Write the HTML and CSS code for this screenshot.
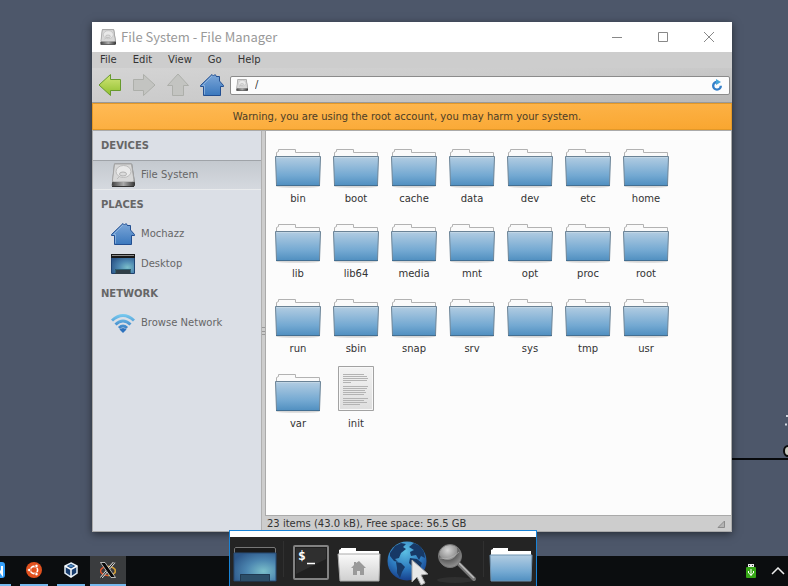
FILE: index.html
```html
<!DOCTYPE html>
<html lang="en">
<head>
<meta charset="utf-8">
<title>File System - File Manager</title>
<link rel="stylesheet" href="styles.css">
</head>
<body>
<svg class="defs" aria-hidden="true">
  <defs>
    <linearGradient id="gFolder" x1="0" y1="0" x2="0" y2="1"><stop offset="0" stop-color="#b3cde2"/><stop offset=".65" stop-color="#74a9d2"/><stop offset="1" stop-color="#508fc0"/></linearGradient>
    <linearGradient id="gHome" x1="0" y1="0" x2="0" y2="1"><stop offset="0" stop-color="#7ba6d8"/><stop offset="1" stop-color="#3b78bd"/></linearGradient>
    <linearGradient id="gGreen" x1="0" y1="0" x2="0" y2="1"><stop offset="0" stop-color="#d3e67a"/><stop offset="1" stop-color="#8fbf2d"/></linearGradient>
    <linearGradient id="gGrey" x1="0" y1="0" x2="0" y2="1"><stop offset="0" stop-color="#fafafa"/><stop offset="1" stop-color="#cfcfcf"/></linearGradient>
    <linearGradient id="gPaper" x1="0" y1="0" x2="0" y2="1"><stop offset="0" stop-color="#f3f3f3"/><stop offset="1" stop-color="#dedede"/></linearGradient>
    <linearGradient id="gDark" x1="0" y1="0" x2="1" y2="0"><stop offset="0" stop-color="#444"/><stop offset=".5" stop-color="#aaa"/><stop offset="1" stop-color="#333"/></linearGradient>
    <linearGradient id="gWifi" gradientUnits="userSpaceOnUse" x1="0" y1="3" x2="0" y2="22"><stop offset="0" stop-color="#7accf0"/><stop offset="1" stop-color="#2468b8"/></linearGradient>
    <radialGradient id="gDesk" cx=".7" cy=".65" r=".8"><stop offset="0" stop-color="#7bbfca"/><stop offset=".5" stop-color="#4c86b0"/><stop offset="1" stop-color="#2c5688"/></radialGradient>
    <radialGradient id="gGlobe" cx=".45" cy=".25" r=".75"><stop offset="0" stop-color="#5cc0e4"/><stop offset=".6" stop-color="#2c78bd"/><stop offset="1" stop-color="#17408c"/></radialGradient>
    <radialGradient id="gLens" cx=".4" cy=".25" r=".8"><stop offset="0" stop-color="#d5d5d5"/><stop offset=".5" stop-color="#929292"/><stop offset=".55" stop-color="#606060"/><stop offset="1" stop-color="#9a9a9a"/></radialGradient>
  </defs>
  <symbol id="folder" viewBox="0 0 48 48">
    <ellipse cx="24" cy="46.5" rx="22" ry="1.3" fill="#000" opacity=".15"/>
    <path d="M2.500 17V12.500L4.500 11.500V9.500H21.500V12.500H45.500V17Z" fill="#fafafa" stroke="#b2b2b2"/>
    <path d="M1.500 16.500H46.500L45.500 45.500H2.500Z" fill="url(#gFolder)" stroke="#6b8396"/>
    <path d="M2.500 17.500H45.500" stroke="#cadbe8" opacity=".7"/>
    <path d="M2 45.500H46" stroke="#436f92"/>
  </symbol>
  <symbol id="homefolder" viewBox="0 0 48 48">
    <path d="M4 17V12L6 11V10H21V13H44V17Z" fill="#fff"/>
    <path d="M3 16H45L44 43H5Z" fill="url(#gGrey)" stroke="#aaa"/>
    <path d="M24 23l7 7h-2v7h-4v-4h-3v4h-4v-7h-2l3-3v-3h2v1z" fill="#9a9a9a"/>
  </symbol>
  <symbol id="doc" viewBox="0 0 48 48">
    <path d="M6.500 1.500H41.500V45.500H6.500Z" fill="url(#gPaper)" stroke="#a2a2a2"/>
    <path d="M7.500 2.500H40.500V44.500H7.500Z" fill="none" stroke="#f8f8f8"/>
    <path d="M11 9.500H32M11 11.500H35M11 13.500H36M11 15.500H35M11 17.500H19M11 21.500H36M11 23.500H35M11 25.500H33M11 27.500H34M11 29.500H32M11 33.500H36M11 35.500H32M11 37.500H35M11 39.500H28" stroke="#b3b3b3"/>
  </symbol>
  <symbol id="drive" viewBox="0 0 24 24">
    <path d="M1 20L3 1Q3.200.5 4 .5H20Q21 .5 21.200 1L24 19V22Q24 23.500 22 23.500H2Q.5 23.500.5 22Z" fill="#858585"/>
    <path d="M3.500 1H20.500L23 17Q23 19 21 19H3Q1 19 1.500 17Z" fill="#d8d8d8" stroke="#a5a5a5"/>
    <ellipse cx="12.500" cy="8.500" rx="7.500" ry="6" fill="#e9e9e9" stroke="#bbb"/>
    <ellipse cx="12" cy="11" rx="3.500" ry="2" fill="#dcdcdc" stroke="#b0b0b0"/>
    <path d="M10 12L6 16" stroke="#bbb"/>
    <rect x="1" y="19" width="23" height="4" rx="1" fill="url(#gDark)"/>
    <path d="M1 23.500H23" stroke="#333"/>
  </symbol>
  <symbol id="home" viewBox="0 0 24 24">
    <path d="M12 1.500L13.500 3L15 1.500L17 4V3.500H19.500V8L23.500 12.500V13.500H20.500V22.500H3.500V13.500H.5V12.500Z" fill="url(#gHome)" stroke="#234f91"/>
    <path d="M12 3L2.500 12.500H4.500V21.500" fill="none" stroke="#9dbfe4" opacity=".7"/>
  </symbol>
  <symbol id="screen" viewBox="0 0 24 24">
    <rect x="0" y="2" width="24" height="20" rx="1" fill="#1f4270"/>
    <rect x="1" y="5" width="22" height="16" fill="url(#gDesk)"/>
    <path d="M0 6V2H24V6Z" fill="#181818"/><path d="M1 3.500H23" stroke="#8c8c8c"/>
    <path d="M4 17H20V22H4Z" fill="#303e47"/><path d="M4.500 21V17.500H19.500V21" fill="none" stroke="#2d6072"/>
  </symbol>
  <symbol id="wifi" viewBox="0 0 24 24">
    <g fill="none" stroke="url(#gWifi)" stroke-width="3"><path d="M1 9.500Q12 -.5 23 9.500"/><path d="M4.500 13.500Q12 6.500 19.500 13.500"/><path d="M8 17Q12 13 16 17"/></g>
    <path d="M8.500 18.500Q12 15.500 15.500 18.500L12 22Z" fill="#2d72bd"/>
  </symbol>
  <symbol id="arrow" viewBox="0 0 24 24"><path d="M1 12L12.500 1.500V6.500H22.500V17.500H12.500V22.500Z"/></symbol>
</svg>

<svg class="scene" viewBox="0 0 56 60" aria-hidden="true">
  <path d="M0 49H56" stroke="#07090c" stroke-width="2"/>
  <ellipse cx="56" cy="41" rx="4" ry="5" fill="#c9c8bd" stroke="#0a0a0a" stroke-width="2"/>
  <path d="M54 6h2M53 14.500h2" stroke="#cfd6df" stroke-width="2"/>
</svg>

<main class="window">
  <header class="titlebar">
    <svg class="title-icon"><use href="#drive"/></svg>
    <h1>File System - File Manager</h1>
    <div class="controls">
      <button aria-label="Minimize"><svg viewBox="0 0 12 12"><path d="M1 6.500H11"/></svg></button>
      <button aria-label="Maximize"><svg viewBox="0 0 12 12"><path d="M1.500 1.500H10.500V10.500H1.500Z"/></svg></button>
      <button aria-label="Close"><svg viewBox="0 0 12 12"><path d="M1 1L11 11M11 1L1 11"/></svg></button>
    </div>
  </header>
  <nav class="menubar"><button>File</button><button>Edit</button><button>View</button><button>Go</button><button>Help</button></nav>
  <div class="toolbar">
    <button class="back" aria-label="Back"><svg><use href="#arrow"/></svg></button>
    <button class="faded forward" aria-label="Forward" disabled><svg><use href="#arrow"/></svg></button>
    <button class="faded up" aria-label="Up" disabled><svg><use href="#arrow"/></svg></button>
    <button aria-label="Home"><svg><use href="#home"/></svg></button>
    <div class="location">
      <svg><use href="#drive"/></svg>
      <input type="text" value="/" aria-label="Location">
      <button aria-label="Reload"><svg viewBox="0 0 12 12"><path d="M9.800 6.800A3.800 3.800 0 1 1 6 3" fill="none" stroke="#347fc9" stroke-width="2.400"/><path d="M5 0L10 3L5 6Z" fill="#46a4d9"/></svg></button>
    </div>
  </div>
  <p class="warning">Warning, you are using the root account, you may harm your system.</p>
  <div class="panes">
    <aside class="sidebar">
      <h2>DEVICES</h2>
      <button class="place selected"><svg><use href="#drive"/></svg>File System</button>
      <h2>PLACES</h2>
      <button class="place"><svg><use href="#home"/></svg>Mochazz</button>
      <button class="place"><svg><use href="#screen"/></svg>Desktop</button>
      <h2>NETWORK</h2>
      <button class="place"><svg><use href="#wifi"/></svg>Browse Network</button>
    </aside>
    <div class="splitter"><i></i></div>
    <section class="files">
      <button><svg><use href="#folder"/></svg>bin</button>
      <button><svg><use href="#folder"/></svg>boot</button>
      <button><svg><use href="#folder"/></svg>cache</button>
      <button><svg><use href="#folder"/></svg>data</button>
      <button><svg><use href="#folder"/></svg>dev</button>
      <button><svg><use href="#folder"/></svg>etc</button>
      <button><svg><use href="#folder"/></svg>home</button>
      <button><svg><use href="#folder"/></svg>lib</button>
      <button><svg><use href="#folder"/></svg>lib64</button>
      <button><svg><use href="#folder"/></svg>media</button>
      <button><svg><use href="#folder"/></svg>mnt</button>
      <button><svg><use href="#folder"/></svg>opt</button>
      <button><svg><use href="#folder"/></svg>proc</button>
      <button><svg><use href="#folder"/></svg>root</button>
      <button><svg><use href="#folder"/></svg>run</button>
      <button><svg><use href="#folder"/></svg>sbin</button>
      <button><svg><use href="#folder"/></svg>snap</button>
      <button><svg><use href="#folder"/></svg>srv</button>
      <button><svg><use href="#folder"/></svg>sys</button>
      <button><svg><use href="#folder"/></svg>tmp</button>
      <button><svg><use href="#folder"/></svg>usr</button>
      <button><svg><use href="#folder"/></svg>var</button>
      <button><svg><use href="#doc"/></svg>init</button>
    </section>
    <footer class="status"><span>23 items (43.0 kB), Free space: 56.5 GB</span><svg viewBox="0 0 8 8"><path d="M1 7.500L7.500 1V7.500Z" fill="#b4b4b4" stroke="#8b8b8b"/></svg></footer>
  </div>
</main>

<footer class="taskbar">
  <button class="task cut" aria-label="Notes"><svg viewBox="0 0 16 16"><rect width="16" height="16" rx="3" fill="#35a0fa"/><path d="M7 12V4L13 12V4" fill="none" stroke="#fff" stroke-width="2"/></svg></button>
  <button class="task" aria-label="Ubuntu"><svg viewBox="0 0 16 16"><circle cx="8" cy="8" r="8" fill="#e2511e"/><circle cx="8" cy="8" r="3.600" fill="none" stroke="#fff" stroke-width="1.600"/><g fill="#fff" stroke="#e2511e" stroke-width=".8"><circle cx="3.200" cy="8" r="1.700"/><circle cx="10.500" cy="3.900" r="1.700"/><circle cx="10.500" cy="12.100" r="1.700"/></g></svg></button>
  <button class="task" aria-label="VirtualBox"><svg viewBox="0 0 16 16"><path d="M8 1L14 4V11L8 15L2 11V4Z" fill="#183c6d" stroke="#e4edf5" stroke-width="1.500"/><path d="M2 4L8 7.500L14 4M8 7.500V15" fill="none" stroke="#fff" stroke-width="1.500"/><path d="M8 2.500L11 4L8 5.500L5 4Z" fill="#4a85bd"/></svg></button>
  <button class="task active" aria-label="X server"><svg viewBox="0 0 16 16"><ellipse cx="8" cy="9" rx="7.500" ry="4.500" fill="none" stroke="#df552b" stroke-width="1.500"/><path d="M8 4.500A7.500 4.500 0 0 1 8 13.500" fill="none" stroke="#c3a138" stroke-width="1.500"/><path d="M14.500 0L1 16" stroke="#ddd" stroke-width="2.500"/><path d="M14.500 0L1 16" stroke="#111"/><path d="M.5 .5H5L15.500 15.500H11Z" fill="#080808" stroke="#ddd" stroke-width=".8"/></svg></button>
  <div class="tray">
    <svg viewBox="0 0 10 16"><path d="M2 1H8V4H2Z" fill="#ececec"/><path d="M3 2.500h1M6 2.500h1" stroke="#333"/><rect x="0" y="4" width="10" height="11" rx="1" fill="#36a716"/><path d="M5 6V13M2.500 8V10L5 12L7.500 10V8" fill="none" stroke="#fff"/></svg>
    <svg class="chevron" viewBox="0 0 14 8"><path d="M1 7L7 1L13 7" fill="none" stroke="#eee" stroke-width="1.500"/></svg>
  </div>
</footer>

<nav class="dock">
  <button aria-label="Show desktop"><svg viewBox="0 0 48 48"><path d="M3 44V11Q3 9 5 9H43Q45 9 45 11V44Z" fill="#1a1a1a"/><path d="M3.500 15V10.500Q4 9.500 5 9.500H43Q44.500 9.500 44.500 11V15" fill="none" stroke="#777"/><path d="M3 15H45V43H3Z" fill="url(#gDesk)" stroke="#284c75"/><path d="M9 43V36H39V43Z" fill="#2c4e68"/><path d="M9.500 43V36.500H38.500V43" fill="none" stroke="#203a52"/></svg></button>
  <i class="divider"></i>
  <button aria-label="Terminal"><svg viewBox="0 0 48 48"><rect x="7" y="8" width="34" height="33" rx="1" fill="#202020" stroke="#828282" stroke-width="2"/><path d="M9 10H39V21L9 36Z" fill="#fff" opacity=".07"/><text x="11" y="22">$</text><path d="M20 25.500H28" stroke="#fff" stroke-width="1.500"/></svg></button>
  <button aria-label="Home folder"><svg><use href="#homefolder"/></svg></button>
  <button aria-label="Web browser"><svg viewBox="0 0 48 48"><circle cx="24" cy="23" r="19.500" fill="url(#gGlobe)"/><path d="M7 15L12 8L18 5L23 6L20 9L23 11L18 15L16 20L12 21L15 24L11 23L7 18ZM13 24L18 25L22 29L19 34L17 40L14 35L14 30ZM26 9L31 5L37 8L41 14L42 20L38 18L36 22L33 17L28 18L27 14L31 12ZM27 20L34 21L39 25L36 32L32 35L29 28L26 25Z" fill="#173966"/><path d="M29 22V44L34 39L38 47L42 45L38 37L45 36Z" fill="#e8e8e8" stroke="#aaa"/></svg></button>
  <button aria-label="Search"><svg viewBox="0 0 48 48"><ellipse cx="24" cy="42" rx="18" ry="3" fill="#303030"/><path d="M28 26L43 41" stroke="#777" stroke-width="4" stroke-linecap="round"/><path d="M28 25L43 40" stroke="#bbb" stroke-width="1.500"/><circle cx="19" cy="18" r="11.500" fill="url(#gLens)" stroke="#777"/><path d="M9 20Q19 23 28 14" fill="none" stroke="#bcbcbc" opacity=".6"/></svg></button>
  <i class="divider"></i>
  <button aria-label="Files"><svg viewBox="0 0 48 48"><path d="M4 17V12L6 11V10H21V13H44V17Z" fill="#fff"/><path d="M3 17H45L44 43H4Z" fill="url(#gFolder)" stroke="#7396b3"/></svg></button>
</nav>
</body>
</html>
```
FILE: styles.css
```css
* { box-sizing: border-box; }
body {
  margin: 0;
  min-height: 100vh;
  overflow: hidden;
  position: relative;
  background: #4d576a;
  color: #333;
  font: 10px/14px "DejaVu Sans", sans-serif;
}
h1, h2, p { margin: 0; font: inherit; }
button, input { border: 0; padding: 0; background: none; color: inherit; font: inherit; }
svg { display: block; flex: none; }
.defs { position: absolute; width: 0; height: 0; }
.scene { position: absolute; right: 0; top: 410px; width: 56px; height: 60px; }

.window {
  position: absolute;
  inset: 22px 56px 54px 92px;
  display: flex;
  flex-direction: column;
  background: #cdcdcd;
  box-shadow: 0 2px 8px rgba(0, 0, 0, .5);
}
.titlebar { display: flex; align-items: center; height: 30px; padding-left: 8px; background: #fff; }
.title-icon { width: 16px; height: 16px; }
.titlebar h1 { flex: 1; padding-left: 5px; color: #999; font: 13px/16px "Noto Sans CJK SC", "Noto Sans", sans-serif; }
.controls { display: flex; }
.controls button { display: grid; place-items: center; width: 46px; height: 30px; }
.controls svg { width: 12px; height: 12px; fill: none; stroke: #888; }

.menubar { display: flex; gap: 16px; height: 16px; padding-left: 8px; }
.toolbar {
  display: flex;
  align-items: center;
  gap: 10px;
  height: 35px;
  padding: 0 2px 0 6px;
  border-bottom: 1px solid #999;
  background: linear-gradient(176deg, #d4d4d4, #cbcbcb 50%, #b8b8b8);
}
.toolbar > button svg { width: 24px; height: 24px; fill: url(#gGreen); stroke: #679a2c; }
.toolbar .faded svg { fill: #c3c4c1; stroke: #adafaa; }
.forward svg { transform: rotate(180deg); }
.up svg { transform: rotate(90deg); }
.location {
  display: flex;
  align-items: center;
  gap: 7px;
  flex: 1;
  height: 19px;
  margin-left: -4px;
  padding: 0 6px 0 5px;
  border: 1px solid #8b8b8b;
  border-radius: 2px;
  background: #fcfcfc;
}
.location > svg { width: 12px; height: 12px; }
.location input { flex: 1; min-width: 0; outline: 0; }
.location button svg { width: 12px; height: 12px; }

.warning {
  height: 27px;
  padding-right: 10px;
  border: 1px solid #e39827;
  background: linear-gradient(178deg, #ffba55, #f9a630);
  color: #4b3d27;
  line-height: 25px;
  text-align: center;
}
.panes {
  display: grid;
  grid-template: 1fr 15px / 169px 3px 1fr;
  flex: 1;
  min-height: 0;
  border: 1px solid #aaa;
}
.sidebar { grid-row: 1 / 3; display: flex; flex-direction: column; border-right: 1px solid #b0b0b0; background: #dbdfe6; color: #666; }
.sidebar h2 { padding-left: 8px; font-weight: bold; line-height: 29px; }
.place { display: flex; align-items: center; gap: 6px; height: 30px; padding-left: 18px; }
.place svg { width: 24px; height: 24px; }
.place.selected { border-top: 1px solid #9fa3a8; border-bottom: 1px solid #e9ebed; background: linear-gradient(#c4c9cf, #d5d9df); }
.splitter { grid-row: 1 / 3; grid-column: 2; display: grid; place-items: center; }
.splitter i { width: 3px; height: 8px; border-block: 1px solid #999; background: linear-gradient(#ccc 3px, #999 3px 4px, #ccc 4px); }
.files {
  display: grid;
  grid-template-columns: repeat(auto-fill, 58px);
  grid-auto-rows: 75px;
  align-content: start;
  padding: 9px 50px 9px 3px;
  border-left: 1px solid #aaa;
  border-bottom: 1px solid #aaa;
  background: #fcfcfc;
}
.files button { display: flex; flex-direction: column; align-items: center; gap: 4px; }
.files svg { width: 48px; height: 48px; }
.status { grid-column: 3; display: flex; justify-content: space-between; align-items: center; padding: 1px 6px 0 2px; }
.status svg { width: 8px; height: 8px; }

.taskbar { position: absolute; inset: auto 0 0; display: flex; height: 30px; background: #0b0d0f; }
.task { display: grid; place-items: center; width: 28px; margin-right: 9px; border-bottom: 2px solid #76b9ed; }
.task svg { width: 16px; height: 16px; }
.task.cut { width: 11px; justify-content: end; padding-right: 6px; }
.task.active { width: 36px; margin-left: -4px; background: #3a3c3e; }
.tray { display: flex; align-items: center; gap: 15px; margin-left: auto; padding-right: 3px; }
.tray svg { width: 10px; height: 16px; }
.tray .chevron { width: 14px; height: 8px; }

.dock {
  position: absolute;
  left: 229px;
  bottom: 0;
  display: flex;
  width: 308px;
  height: 56px;
  padding: 1px 1px 0;
  border: 1px solid #1883d7;
  border-bottom: 0;
  background: linear-gradient(#fff 6px, #242424 6px);
  align-items: end;
}
.dock svg { width: 48px; height: 48px; }
.dock text { fill: #fff; font: bold 13px "DejaVu Sans Mono", monospace; }
.divider { width: 8px; height: 36px; background: linear-gradient(90deg, transparent 4px, #303030 4px 5px, transparent 5px); align-self: center; }
```
